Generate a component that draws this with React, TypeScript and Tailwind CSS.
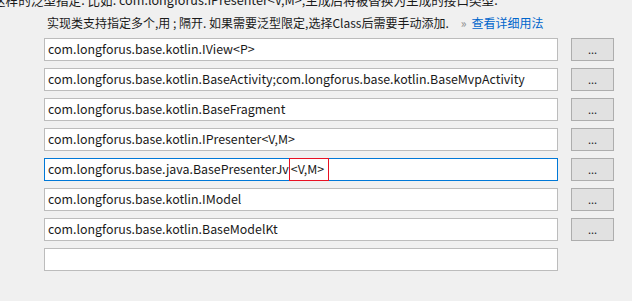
const rows = [
   { text: "com.longforus.base.kotlin.IView<P>" },
   {
      text: "com.longforus.base.kotlin.BaseActivity;com.longforus.base.kotlin.BaseMvpActivity",
   },
   { text: "com.longforus.base.kotlin.BaseFragment" },
   { text: "com.longforus.base.kotlin.IPresenter<V,M>" },
   { text: "com.longforus.base.java.BasePresenterJv", mark: "<V,M>", focus: true },
   { text: "com.longforus.base.kotlin.IModel" },
   { text: "com.longforus.base.kotlin.BaseModelKt" },
];

const font = {
   fontFamily: '"Noto Sans CJK SC", "Noto Sans", sans-serif',
};

const App = () => {
   return (
      <div
         className="w-[632px] h-[301px] overflow-hidden bg-[#f0f0f0] text-[12px] text-[#1a1a1a]"
         style={font}
      >
         <div className="-mt-[9px] -ml-[7px] h-[18px] leading-[18px] text-[12.6px] whitespace-nowrap">
            这样的泛型指定. 比如: com.longforus.IPresenter&lt;V,M&gt;,生成后将被替换为生成的接口类型.
         </div>
         <div className="flex items-center h-[19px] mt-[4px] pl-[47px] whitespace-nowrap">
            <span>实现类支持指定多个,用 ; 隔开. 如果需要泛型限定,选择Class后需要手动添加.</span>
            <span className="ml-[12px] text-[12px] text-[#8c8c8c]">»</span>
            <span className="ml-[5px] text-[#0066cc]">查看详细用法</span>
         </div>
         <div className="flex flex-col gap-[7px] mt-[6px] text-[12.4px]">
            {rows.map((r, i) => (
               <div key={i} className="flex items-center h-[23px]">
                  <div
                     className={
                        "ml-[44px] w-[514px] h-[23px] bg-white border flex items-center pl-[3px] whitespace-nowrap " +
                        (r.focus ? "border-[#0078d7]" : "border-[#bcbcbc]")
                     }
                  >
                     <span>{r.text}</span>
                     {r.mark && (
                        <span className="h-[23px] -my-px flex items-center pl-px pr-[4px] border border-[#e81123]">
                           {r.mark}
                        </span>
                     )}
                  </div>
                  <div className="ml-[13px] w-[43px] h-[23px] bg-[#e1e1e1] border border-[#adadad] flex items-center justify-center text-[11px] leading-none">
                     ...
                  </div>
               </div>
            ))}
            <div className="flex items-center h-[23px]">
               <div className="ml-[44px] w-[514px] h-[23px] bg-white border border-[#bcbcbc]" />
            </div>
         </div>
      </div>
   );
};
export default App;
